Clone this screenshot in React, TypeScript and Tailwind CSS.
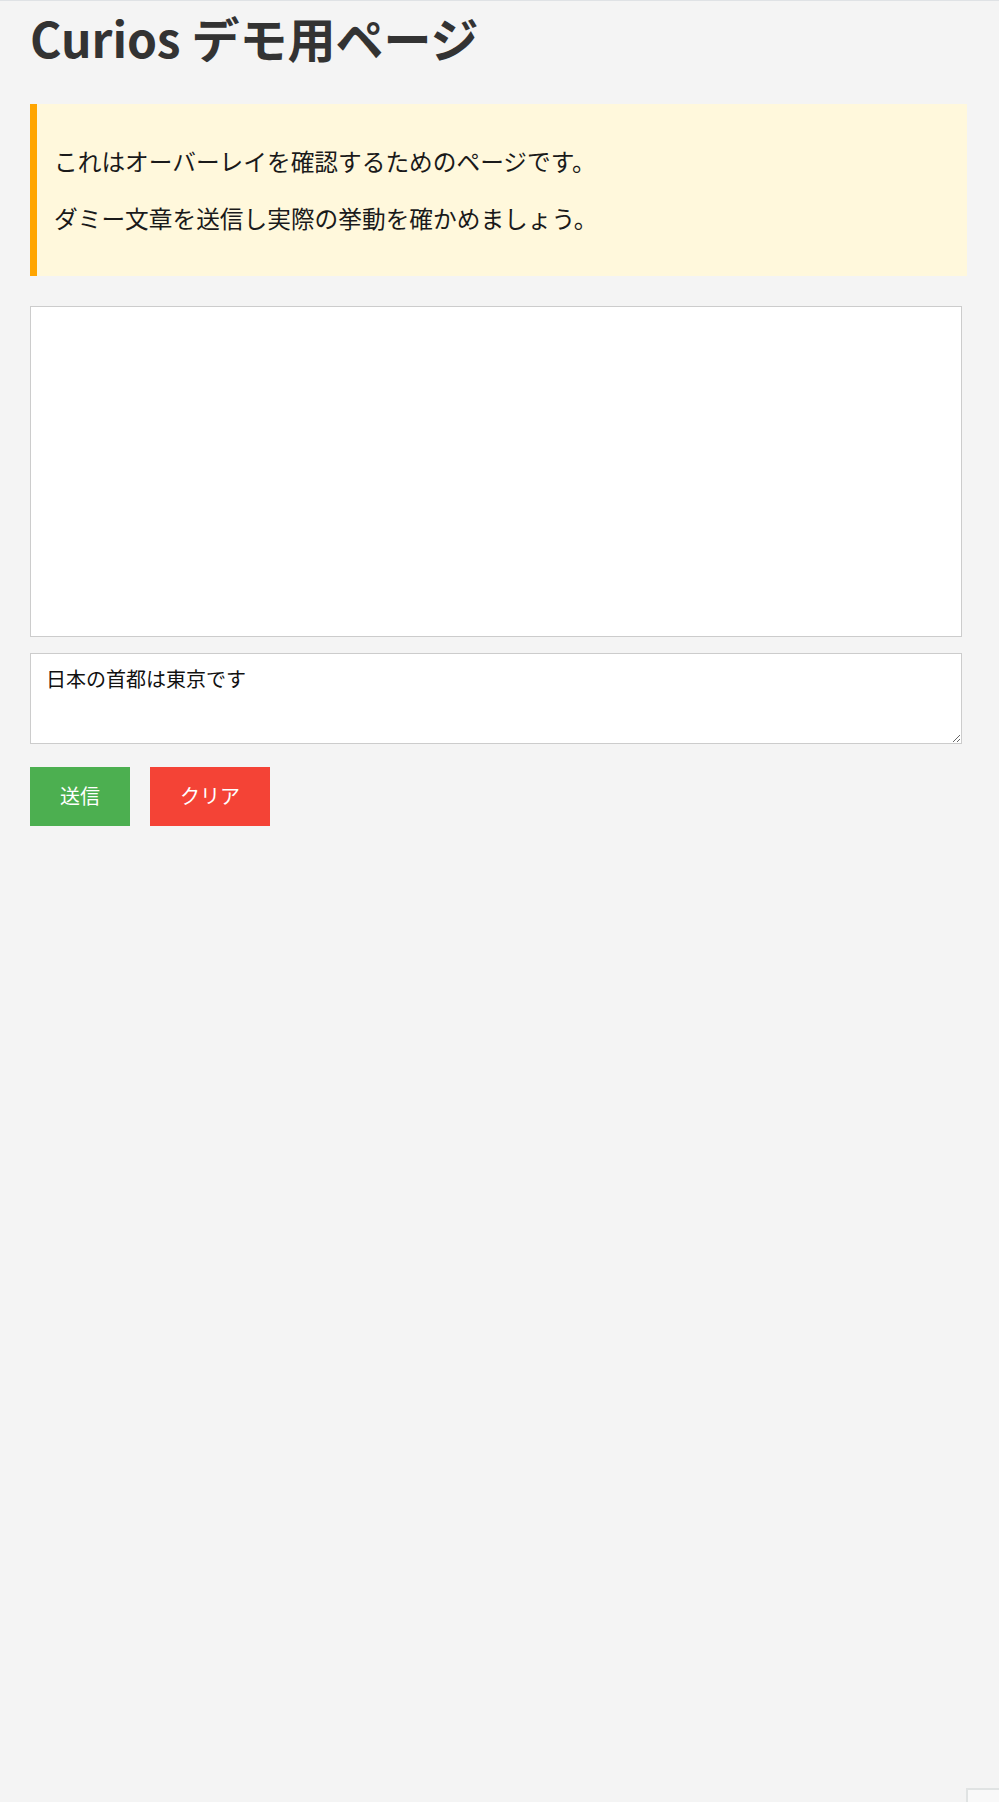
import React from "react";

const jp = { fontFamily: '"Noto Sans CJK JP", "Noto Sans", sans-serif' };

export default function App() {
  return (
    <div
      className="min-h-screen bg-[#f4f4f4] border-t border-[#dfe2e5] pl-[30px] pr-[32px] text-[#1a1a1a]"
      style={jp}
    >
      <h1 className="text-[48px] font-bold leading-[1.2] text-[#333] pt-[8px] mb-[37px]">
        Curios デモ用ページ
      </h1>

      <div className="bg-[#fff8dc] border-l-[7px] border-[#ffa500] p-[17px] text-[23.7px] leading-[34.5px]">
        <p className="my-[23px]">これはオーバーレイを確認するためのページです。</p>
        <p className="my-[23px]">ダミー文章を送信し実際の挙動を確かめましょう。</p>
      </div>

      <textarea
        className="block mt-[30px] w-[932px] h-[331px] bg-white border border-[#cccccc] resize-none outline-none"
        style={jp}
      />

      <textarea
        className="block mt-[16px] w-[932px] h-[91px] bg-white border border-[#cccccc] px-[15px] py-[10px] text-[20px] leading-[1.45] text-[#111] outline-none"
        style={jp}
        defaultValue="日本の首都は東京です"
      />

      <div className="flex gap-5 mt-[23px]">
        <button className="w-[100px] h-[59px] bg-[#4caf50] text-white text-[20px]">
          送信
        </button>
        <button className="w-[120px] h-[59px] bg-[#f44336] text-white text-[20px]">
          クリア
        </button>
      </div>

      <div className="fixed left-[966px] top-[1788px] w-[60px] h-[60px] border-2 border-[#e0e3e3] bg-[#f9f9f9]" />
    </div>
  );
}
